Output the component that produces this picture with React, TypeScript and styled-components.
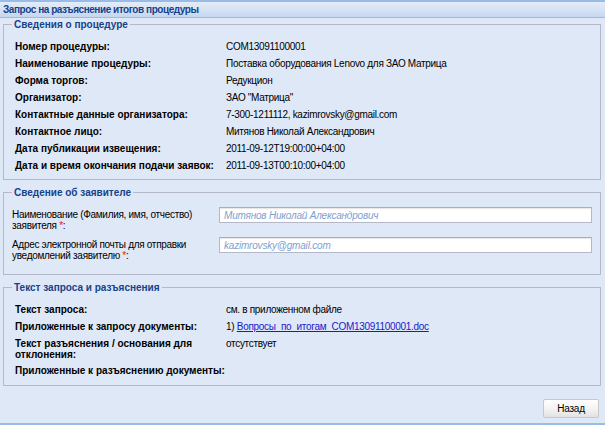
import React from "react";
import styled, { createGlobalStyle } from "styled-components";

const GlobalStyle = createGlobalStyle`
  html, body {
    margin: 0;
    padding: 0;
    background: #dfe8f6;
  }
  body {
    font-family: "Liberation Sans", Arial, sans-serif;
    font-size: 10px;
    color: #000;
  }
  *, *:before, *:after {
    box-sizing: border-box;
  }
`;

const Panel = styled.div`
  width: 605px;
  height: 425px;
  display: flex;
  flex-direction: column;
  background: #dfe8f6;
  border-bottom: 2px solid #99bbe8;
  overflow: hidden;
`;

const Header = styled.div`
  height: 18px;
  flex: none;
  padding: 2px 0 0 3px;
  border-top: 2px solid #99bbe8;
  border-bottom: 1px solid #99bbe8;
  background: linear-gradient(#e3ecf8 0%, #d6e3f3 50%, #c4d7f0 100%);
  color: #15428b;
  font-weight: bold;
  font-size: 10px;
  letter-spacing: -0.45px;
  line-height: 12px;
`;

const Body = styled.div`
  flex: 1;
  display: flex;
  flex-direction: column;
  gap: 6px;
  padding: 0 4px 0 3px;
`;

const Fieldset = styled.fieldset<{ $bottom: number }>`
  margin: 0;
  padding: 0 10px ${(p) => p.$bottom}px 11px;
  border: 1px solid #b5b8c8;
  min-width: 0;
`;

const Legend = styled.legend`
  padding: 0 2px;
  margin-left: -3px;
  color: #15428b;
  font-weight: bold;
  font-size: 10px;
  line-height: 13px;
`;

const InfoGrid = styled.div`
  display: grid;
  grid-template-columns: 211px 1fr;
  padding-top: 7px;
`;

const Label = styled.div<{ $lh?: number }>`
  font-weight: bold;
  line-height: ${(p) => p.$lh ?? 12}px;
  padding: 2.5px 0;
`;

const Value = styled.div`
  line-height: 12px;
  padding: 2.5px 0;
  letter-spacing: -0.3px;
`;

const FormGrid = styled.div`
  display: grid;
  grid-template-columns: 207px 1fr;
  row-gap: 6px;
  padding: 8px 0 7px;
  margin-left: -3px;
  margin-right: -2px;
`;

const FormLabel = styled.label`
  line-height: 11px;
  padding-top: 2px;
  letter-spacing: -0.3px;
`;

const Required = styled.span`
  color: #e02020;
`;

const TextInput = styled.input`
  height: 16px;
  width: 100%;
  padding: 0 4px;
  border: 1px solid #b5b8c8;
  border-top-color: #a8acbc;
  background: #fff;
  box-shadow: inset 0 1px 1px #e6e6e6;
  color: #7d9fd2;
  font-family: "Liberation Sans", Arial, sans-serif;
  font-style: italic;
  font-size: 10px;
  letter-spacing: -0.2px;
  outline: none;
`;

const DocLink = styled.a`
  color: #1a1acc;
  text-decoration: underline;
`;

const Footer = styled.div`
  display: flex;
  justify-content: flex-end;
  padding: 7px 2px 0 0;
`;

const Button = styled.button`
  width: 56px;
  height: 19px;
  padding: 0;
  border: 1px solid #c8c8c8;
  border-radius: 2px;
  background: linear-gradient(#ffffff 0%, #f4f4f4 50%, #e2e2e2 100%);
  font-family: "Liberation Sans", Arial, sans-serif;
  font-size: 10px;
  letter-spacing: -0.2px;
  color: #000;
`;

const procedure: [string, React.ReactNode][] = [
  ["Номер процедуры:", "COM13091100001"],
  ["Наименование процедуры:", "Поставка оборудования Lenovo для ЗАО Матрица"],
  ["Форма торгов:", "Редукцион"],
  ["Организатор:", 'ЗАО "Матрица"'],
  ["Контактные данные организатора:", "7-300-1211112, kazimrovsky@gmail.com"],
  ["Контактное лицо:", "Митянов Николай Александрович"],
  ["Дата публикации извещения:", "2011-09-12T19:00:00+04:00"],
  ["Дата и время окончания подачи заявок:", "2011-09-13T00:10:00+04:00"],
];

export default function App() {
  return (
    <>
      <GlobalStyle />
      <Panel>
        <Header>Запрос на разъяснение итогов процедуры</Header>
        <Body>
          <Fieldset $bottom={5}>
            <Legend>Сведения о процедуре</Legend>
            <InfoGrid>
              {procedure.map(([label, value], i) => (
                <React.Fragment key={i}>
                  <Label>{label}</Label>
                  <Value>{value}</Value>
                </React.Fragment>
              ))}
            </InfoGrid>
          </Fieldset>

          <Fieldset $bottom={6}>
            <Legend>Сведение об заявителе</Legend>
            <FormGrid>
              <FormLabel>
                Наименование (Фамилия, имя, отчество)
                <br />
                заявителя <Required>*</Required>:
              </FormLabel>
              <TextInput readOnly value="Митянов Николай Александрович" />
              <FormLabel>
                Адрес электронной почты для отправки
                <br />
                уведомлений заявителю <Required>*</Required>:
              </FormLabel>
              <TextInput readOnly value="kazimrovsky@gmail.com" />
            </FormGrid>
          </Fieldset>

          <Fieldset $bottom={6}>
            <Legend>Текст запроса и разъяснения</Legend>
            <InfoGrid>
              <Label>Текст запроса:</Label>
              <Value>см. в приложенном файле</Value>
              <Label>Приложенные к запросу документы:</Label>
              <Value>
                1) <DocLink href="#">Вопросы_по_итогам_COM13091100001.doc</DocLink>
              </Value>
              <Label $lh={11}>
                Текст разъяснения / основания для
                <br />
                отклонения:
              </Label>
              <Value>отсутствует</Value>
              <Label>Приложенные к разъяснению документы:</Label>
              <Value />
            </InfoGrid>
          </Fieldset>

          <Footer>
            <Button>Назад</Button>
          </Footer>
        </Body>
      </Panel>
    </>
  );
}
